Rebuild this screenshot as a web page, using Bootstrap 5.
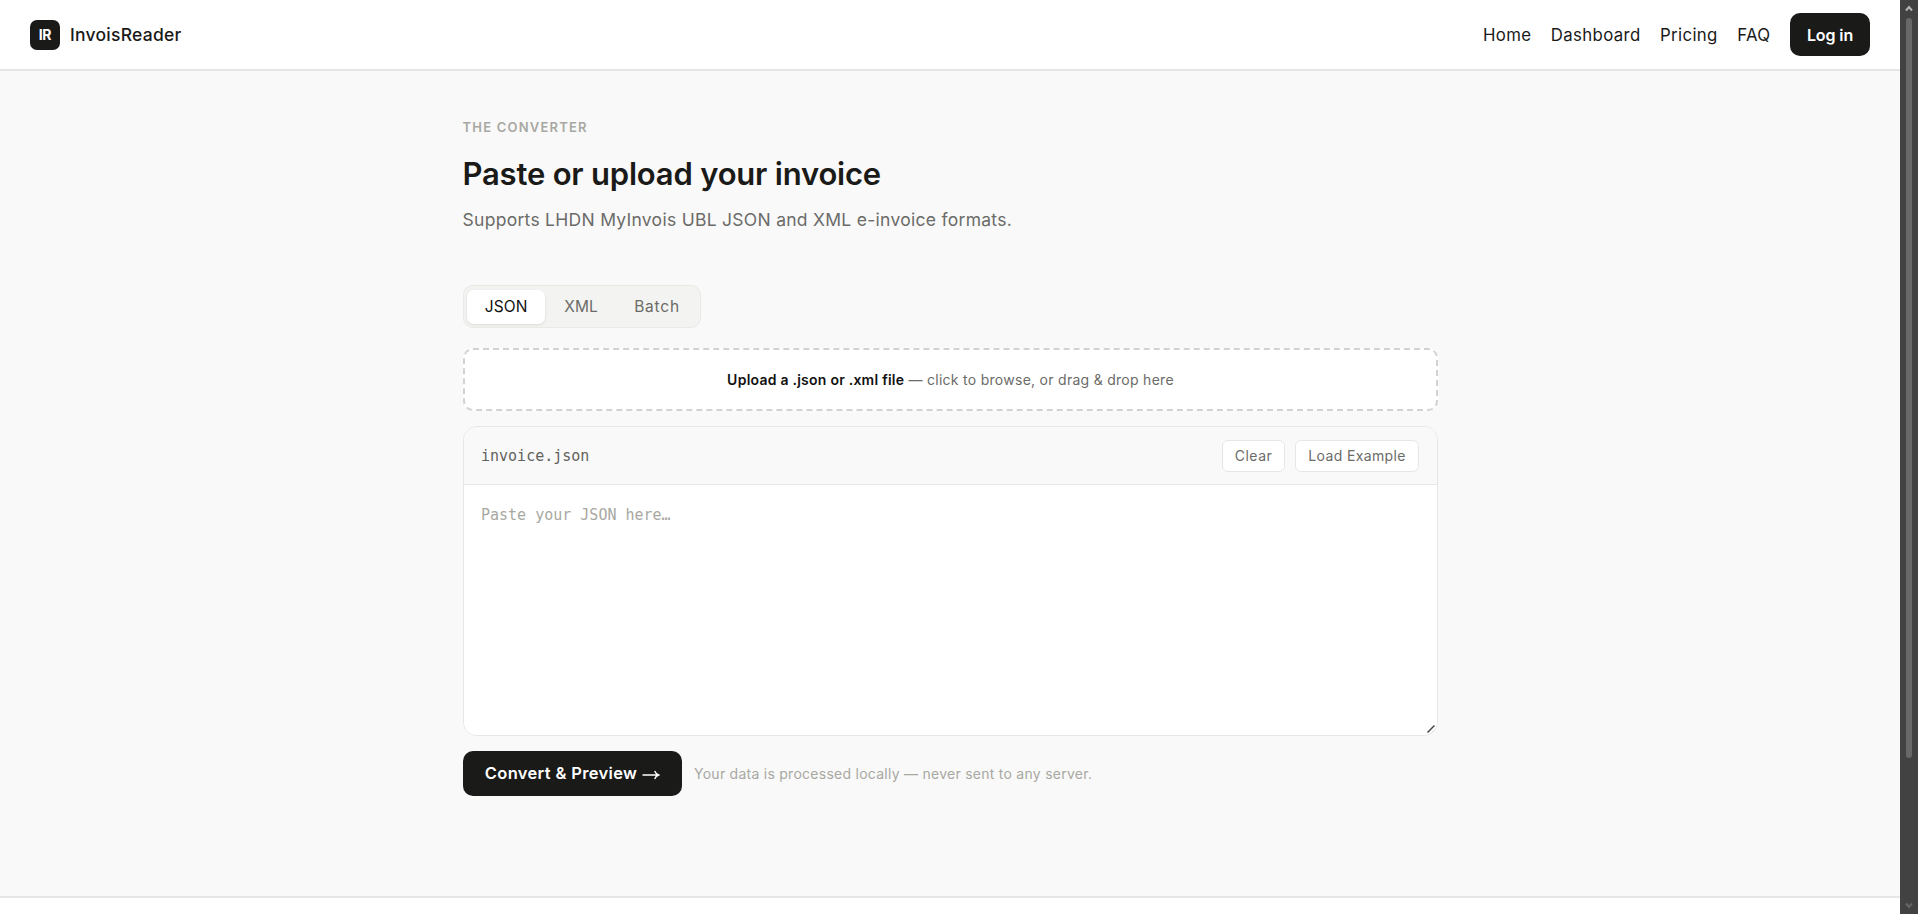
<!DOCTYPE html>
<html lang="en">
<head>
<meta charset="utf-8">
<meta name="viewport" content="width=device-width, initial-scale=1">
<title>InvoisReader</title>
<link rel="stylesheet" href="https://cdn.jsdelivr.net/npm/bootstrap@5.3.0/dist/css/bootstrap.min.css">
<style>
:root{--ink:#1a1a18;--muted:#6b6b68;--faint:#a8a8a2;--line:#e6e6e4;--paper:#f9f9f9}
body{font-family:Inter,"Liberation Sans",sans-serif;background:var(--paper);color:var(--ink);overflow:hidden;white-space:nowrap}
.top-bar{height:71px;border-bottom:2px solid #e6e6e6;padding:0 30px}
.brand-mark{width:30px;height:30px;border-radius:7px;background:var(--ink);font-size:14px;letter-spacing:-.2px}
.brand-name{font-size:17.5px;font-weight:500;letter-spacing:.25px;color:var(--ink);margin-left:10px;padding-top:2px}
.top-links{gap:19.5px}
.top-links .nav-link{font-size:16.8px;letter-spacing:.35px;color:var(--ink);line-height:24px}
.btn-dark-ink{background:var(--ink);color:#fff;border:0;font-weight:600;border-radius:10px}
.btn-login{width:80px;height:43px;font-size:16px;letter-spacing:-.1px}
.converter{width:975px;margin-left:463px}
.eyebrow{font-size:13px;font-weight:600;letter-spacing:1.2px;color:var(--faint);line-height:20px;margin-top:46px;margin-left:-.5px}
.headline{font-size:31px;font-weight:600;letter-spacing:-.2px;line-height:40px;margin:17px 0 0 -.5px}
.subline{font-size:17.5px;letter-spacing:.28px;color:var(--muted);line-height:28px;margin:12px 0 0 -.5px}
.mode-tabs{width:238px;height:43px;margin-top:51px;background:#f3f3f1;border:1px solid #e9e9e6;border-radius:10px;padding:4px 3px 3px}
.mode-tabs .nav-link{height:34px;font-size:15.5px;letter-spacing:.1px;color:var(--muted);padding:0 17.7px;border-radius:7px;line-height:34px}
.mode-tabs .nav-link.active{background:#fff;color:#111;box-shadow:0 1px 3px rgba(0,0,0,.1);margin-right:1.5px}
.mode-tabs .wide{letter-spacing:.8px;padding-left:18.5px}
.drop-area{height:63px;margin-top:20px;background:#fff;border:2px dashed #d2d2d0;border-radius:10px;font-size:14px;letter-spacing:.28px;color:var(--muted)}
.drop-area strong{font-weight:600;color:#111;letter-spacing:.24px}
.editor{height:310px;margin-top:15px;border:1px solid var(--line);border-radius:14px;overflow:hidden;background:#fff}
.editor-head{height:58px;background:var(--paper);border-bottom:1px solid var(--line);padding:0 18px 0 17px}
.mono{font-family:"DejaVu Sans Mono","Liberation Mono",monospace;font-size:15px}
.file-name{color:#62625c;padding-top:2px}
.btn-tool{height:32px;padding:0;border:1px solid var(--line);border-radius:6px;background:#fff;color:var(--muted);font-size:14px}
.editor textarea{flex:1;border:0;resize:none;padding:18px 17px;outline:0;line-height:24px}
.editor textarea::placeholder{color:var(--faint)}
.grip{right:2px;bottom:2px}
.action-row{margin-top:15px}
.btn-convert{width:219px;height:45px;font-size:16.5px;letter-spacing:.34px;padding:0}
.note{font-size:14px;letter-spacing:.26px;color:var(--faint)}
.next-section{height:18px;background:#fff;border-top:2px solid #e6e6e6}
.scroll-rail{width:18px;background:#424242;padding:5px 0}
.scroll-thumb{width:6px;height:740px;border-radius:3px;background:#686868;margin-top:6px}
</style>
</head>
<body>
<div class="d-flex vh-100">
  <div class="d-flex flex-column flex-grow-1">
    <nav class="top-bar bg-white d-flex align-items-center justify-content-between flex-shrink-0">
      <a class="d-flex align-items-center text-decoration-none" href="#">
        <span class="brand-mark d-flex align-items-center justify-content-center text-white fw-bold">IR</span>
        <span class="brand-name">InvoisReader</span>
      </a>
      <div class="top-links d-flex align-items-center">
        <a class="nav-link" href="#">Home</a>
        <a class="nav-link" href="#">Dashboard</a>
        <a class="nav-link" href="#">Pricing</a>
        <a class="nav-link" href="#">FAQ</a>
        <button class="btn btn-dark-ink btn-login p-0">Log in</button>
      </div>
    </nav>
    <main class="flex-grow-1">
      <section class="converter">
        <div class="eyebrow">THE CONVERTER</div>
        <h1 class="headline">Paste or upload your invoice</h1>
        <p class="subline">Supports LHDN MyInvois UBL JSON and XML e-invoice formats.</p>
        <div class="mode-tabs nav flex-nowrap">
          <a class="nav-link active" href="#">JSON</a>
          <a class="nav-link" href="#">XML</a>
          <a class="nav-link wide" href="#">Batch</a>
        </div>
        <div class="drop-area d-flex align-items-center justify-content-center">
          <div><strong>Upload a .json or .xml file</strong> — click to browse, or drag &amp; drop here</div>
        </div>
        <div class="editor d-flex flex-column position-relative">
          <div class="editor-head d-flex align-items-center justify-content-between flex-shrink-0">
            <span class="mono file-name">invoice.json</span>
            <div class="d-flex">
              <button class="btn btn-tool" style="width:63px;letter-spacing:.5px">Clear</button>
              <button class="btn btn-tool" style="width:124px;letter-spacing:.36px;margin-left:10px">Load Example</button>
            </div>
          </div>
          <textarea class="mono" placeholder="Paste your JSON here…"></textarea>
          <svg class="grip position-absolute" width="8" height="8" viewBox="0 0 8 8"><path d="M.5 7.5l7-7" stroke="#444" stroke-width="1.5"/><path d="M4.5 7.5l3-3" stroke="#ddd"/></svg>
        </div>
        <div class="action-row d-flex align-items-center">
          <button class="btn btn-dark-ink btn-convert d-flex align-items-center justify-content-center">Convert &amp; Preview
            <svg style="margin:2px 0 0 5px" width="18" height="10" viewBox="0 0 18 10" fill="none" stroke="#fff" stroke-width="1.4"><path d="M.5 5h16M12.7 1c.7 2 2 3.4 4 4-2 .6-3.300 2-4 4"/></svg>
          </button>
          <span class="note ms-2 ps-1">Your data is processed locally — never sent to any server.</span>
        </div>
      </section>
    </main>
    <div class="next-section flex-shrink-0"></div>
  </div>
  <div class="scroll-rail d-flex flex-column align-items-center flex-shrink-0">
    <svg width="8" height="7" viewBox="0 0 8 7"><path d="M1 5.5L4 2l3 3.5" fill="none" stroke="#b5b5b5" stroke-width="2"/></svg>
    <div class="scroll-thumb"></div>
    <svg class="mt-auto" width="8" height="7" viewBox="0 0 8 7"><path d="M1 1.5L4 5l3-3.5" fill="none" stroke="#666" stroke-width="2"/></svg>
  </div>
</div>
<script src="https://cdn.jsdelivr.net/npm/bootstrap@5.3.0/dist/js/bootstrap.bundle.min.js"></script>
</body>
</html>
